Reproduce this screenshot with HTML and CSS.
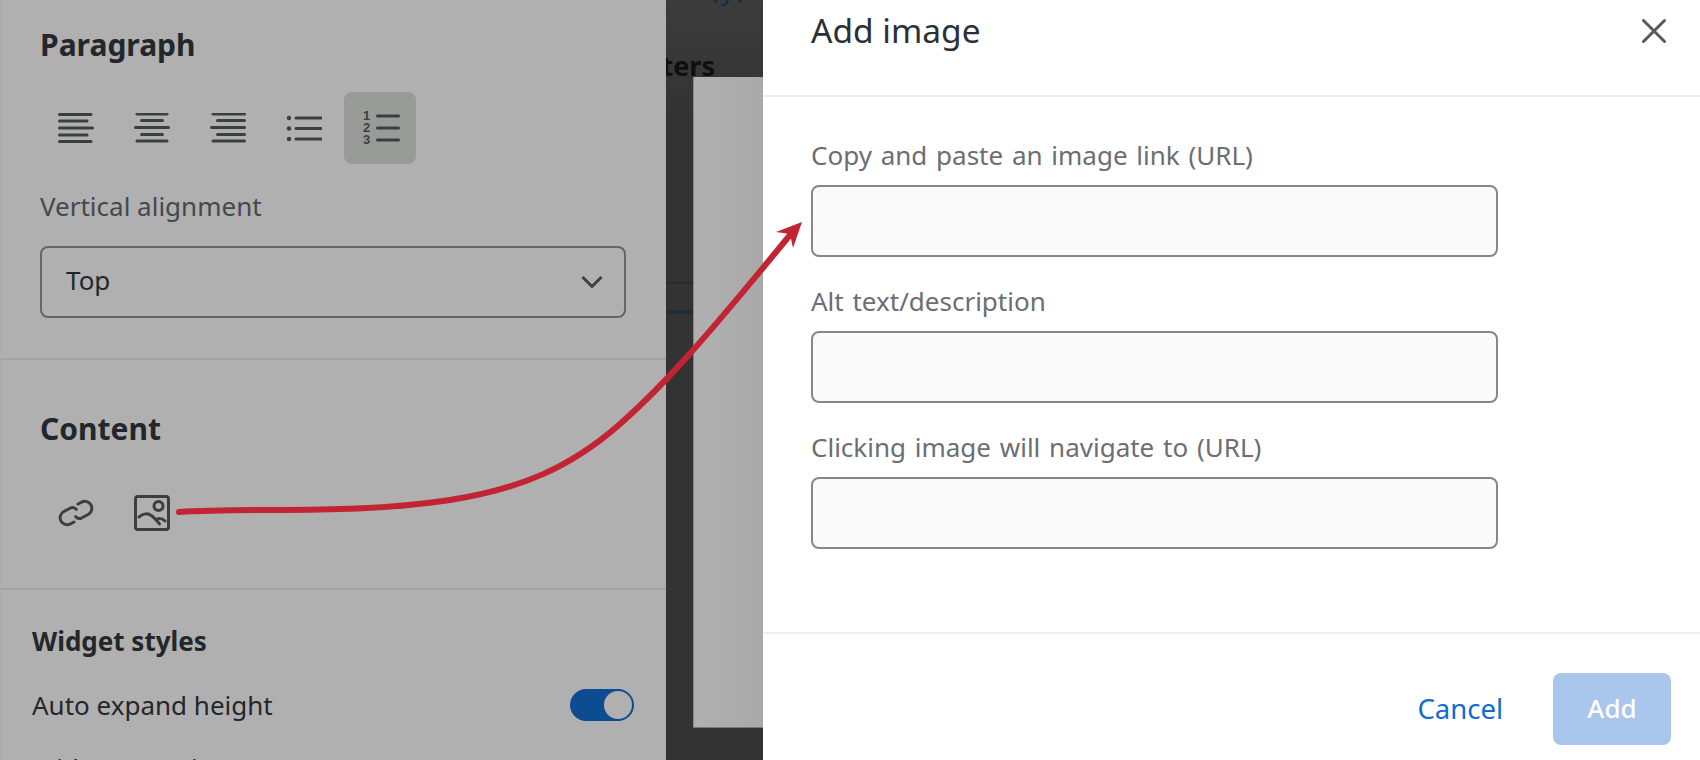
FILE: index.html
```html
<!DOCTYPE html>
<html lang="en">
<head>
<meta charset="utf-8">
<title>Add image</title>
<link rel="stylesheet" href="styles.css">
</head>
<body>
<div class="app">
  <aside class="panel">
    <section class="sec sec-para">
      <h2 class="h">Paragraph</h2>
      <div class="tools">
        <button class="tool"><svg class="ic" viewBox="0 0 36 30"><path d="M1.500 1.500H33M1.500 8H29M1.500 15H34.500M1.500 22H29M1.500 28.500H33"/></svg></button>
        <button class="tool"><svg class="ic" viewBox="0 0 36 30"><path d="M3 1H33M7.500 7.500H28.500M1.500 14.500H34.500M7.500 21.500H28.500M3 28H33"/></svg></button>
        <button class="tool"><svg class="ic" viewBox="0 0 36 30"><path d="M3 1H34.500M7.500 7.500H34.500M1.500 14.500H34.500M7.500 21.500H34.500M3 28H34.500"/></svg></button>
        <button class="tool"><svg class="ic" viewBox="0 0 36 30"><path d="M10 5H35M10 15.500H35M10 26H35"/><g class="dots"><circle cx="3" cy="5" r="2.200"/><circle cx="3" cy="15.500" r="2.200"/><circle cx="3" cy="26" r="2.200"/></g></svg></button>
        <button class="tool on"><span class="nums"><span>1</span><span>2</span><span>3</span></span><svg class="ic ic-num" viewBox="0 0 24 30"><path d="M1.500 3H22.500M1.500 15H22.500M1.500 27H22.500"/></svg></button>
      </div>
      <div class="lab">Vertical alignment</div>
      <div class="select"><span>Top</span><svg class="chev" viewBox="0 0 22 14"><path d="M1.500 2L11 11.500L20.500 2"/></svg></div>
    </section>
    <section class="sec sec-content">
      <h2 class="h">Content</h2>
      <div class="tools tools-c">
        <button class="tool"><svg class="ic2" viewBox="0 0 38 32"><g transform="rotate(-28 19 16)"><path d="M21 13a5 5 0 0 0-4.500-4H9a7 7 0 0 0 0 14H13"/><path d="M17 19a5 5 0 0 0 4.500 4H29a7 7 0 0 0 0-14H25"/></g></svg></button>
        <button class="tool"><svg class="ic3" viewBox="0 0 36 36"><rect x="1.500" y="1.500" width="33" height="33" rx="2.500"/><circle cx="24.500" cy="11" r="4.500"/><path d="M5 22C9 18 14 18 18 21C21 23.500 23.500 26 25.500 29M22 25C24 23 28 23 31 26"/></svg></button>
      </div>
    </section>
    <section class="sec sec-widget">
      <h3 class="h3">Widget styles</h3>
      <div class="row"><span>Auto expand height</span><span class="toggle"><i></i></span></div>
      <div class="cut">Widget margins</div>
    </section>
  </aside>
  <main class="back">
    <div class="peek">(y)</div>
    <div class="filters">Filters</div>
    <div class="strip strip-a"></div>
    <div class="strip strip-b"></div>
    <div class="sheet"></div>
  </main>
  <div class="modal">
    <header class="m-head"><h1>Add image</h1><svg class="close" viewBox="0 0 26 26"><path d="M2.500 2.500L23.500 23.500M23.500 2.500L2.500 23.500"/></svg></header>
    <div class="m-body">
      <label class="f"><span>Copy and paste an image link (URL)</span><input class="inp" type="text"></label>
      <label class="f"><span>Alt text/description</span><input class="inp" type="text"></label>
      <label class="f"><span>Clicking image will navigate to (URL)</span><input class="inp" type="text"></label>
    </div>
    <footer class="m-foot"><a class="cancel">Cancel</a><button class="add">Add</button></footer>
  </div>
  <svg class="arrow" viewBox="0 0 1700 760">
    <path class="shaft" d="M179 512C260 507 350 515 450 500C520 489 570 468 620 424C662 387 700 345 790 235"/>
    <path class="head" d="M802 222L776 232L790 234L793 248Z"/>
  </svg>
</div>
</body>
</html>
```
FILE: styles.css
```css
*{box-sizing:border-box}
html,body{margin:0;height:100%;overflow:hidden}
body{font-family:"Noto Sans","Open Sans",sans-serif;background:#333}
.app{position:relative;display:flex;width:1700px;height:760px;overflow:hidden}
.panel{width:666px;height:760px;flex:none;background:#b0b0b0;border-left:1px solid #a9a9a9;color:#22262a;overflow:hidden}
.sec{border-bottom:2px solid #a3a3a3;padding-left:39px;padding-right:40px}
.sec-para{height:360px;padding-top:25px}
.sec-content{height:230px;padding-top:49px}
.sec-widget{border:0;padding:33px 32px 0 31px}
.h{margin:0;font-size:30px;line-height:40px;font-weight:700;color:#23272b}
.tools{display:flex;gap:4px;margin-top:27px}
.tools-c{margin-top:28px}
.tool{position:relative;width:72px;height:72px;flex:none;display:flex;align-items:center;justify-content:center;background:none;border:0;border-radius:8px;padding:0}
.tool.on{background:#999b99}
.ic{width:36px;height:30px;fill:none;stroke:#3c3e42;stroke-width:3;stroke-linecap:round}
.dots{fill:#3c3e42;stroke:none}
.ic-num{width:24px;margin-left:3px}
.nums{display:flex;flex-direction:column;font-size:13px;line-height:12px;font-weight:700;color:#3c3e42;width:12px;text-align:center}
.ic2{width:38px;height:32px;fill:none;stroke:#3c3e42;stroke-width:3;stroke-linecap:round}
.ic3{width:36px;height:36px;fill:none;stroke:#3c3e42;stroke-width:3;stroke-linecap:round}
.lab{margin-top:23px;font-size:26px;line-height:38px;color:#45484c}
.select{display:flex;align-items:center;justify-content:space-between;margin-top:21px;height:72px;border:2px solid #646566;border-radius:8px;padding:0 21px 4px 24px;font-size:26px;color:#23272b}
.chev{width:22px;height:14px;margin-top:4px;fill:none;stroke:#3c3e42;stroke-width:3}
.h3{margin:0;font-size:26px;line-height:36px;font-weight:700;color:#23272b}
.row{display:flex;align-items:center;justify-content:space-between;margin-top:28px;height:36px;font-size:26px;color:#23272b}
.toggle{display:flex;justify-content:flex-end;align-items:center;width:64px;height:32px;border-radius:16px;background:#0e4c92;padding:2px}
.toggle i{display:block;width:28px;height:28px;border-radius:50%;background:#b0b0b0}
.cut{margin-top:27px;font-size:26px;line-height:36px;color:#23272b;white-space:nowrap}
.back{position:relative;width:97px;flex:none;background:linear-gradient(180deg,#3b3b3b,#333 120px);overflow:hidden}
.peek{position:absolute;left:44px;top:-30px;font-size:28px;letter-spacing:2px;line-height:36px;color:#14284a;white-space:nowrap}
.filters{position:absolute;right:48px;top:48px;font-size:27px;line-height:36px;font-weight:700;color:#0f0f0f;white-space:nowrap}
.strip{position:absolute;left:0;width:27px}
.strip-a{top:282px;height:2px;background:#2a2a2a}
.strip-b{top:310px;height:4px;background:#1f2d3a}
.sheet{position:absolute;left:27px;top:77px;right:0;height:651px;background:linear-gradient(90deg,#b0b0b0,#a9a9a9);border-left:1px solid #888;border-bottom:1px solid #777}
.modal{flex:1;display:flex;flex-direction:column;background:#fff;color:#2c3034}
.m-head{display:flex;align-items:center;justify-content:space-between;height:97px;border-bottom:2px solid #eeeeee;padding:0 31px 33px 48px}
.m-head h1{margin:0 0 2px;font-size:33.500px;line-height:44px;font-weight:400;color:#2c3035}
.close{width:26px;height:26px;fill:none;stroke:#55585d;stroke-width:3;stroke-linecap:round;margin-right:2px}
.m-body{height:537px;padding:36px 202px 0 48px;border-bottom:2px solid #eeeeee}
.f{display:block;height:146px}
.f span{display:block;font-size:26px;word-spacing:2px;line-height:44px;height:52px;color:#6b6e72}
.inp{display:block;width:100%;height:72px;border:2px solid #85878a;border-radius:8px;background:#fafafa;margin:0;padding:0}
.m-foot{display:flex;align-items:center;justify-content:flex-end;flex:1;padding:24px 29px 0 0;gap:50px}
.cancel{font-size:27.500px;color:#0f6cd1;margin-bottom:2px}
.add{width:118px;height:72px;border:0;border-radius:8px;background:#a9c6ec;color:#fff;font:500 26px "Noto Sans",sans-serif;padding:0 0 2px}
.arrow{position:absolute;left:0;top:0;width:1700px;height:760px;pointer-events:none}
.shaft{fill:none;stroke:#c32433;stroke-width:6;stroke-linecap:round}
.head{fill:#c32433}
```
